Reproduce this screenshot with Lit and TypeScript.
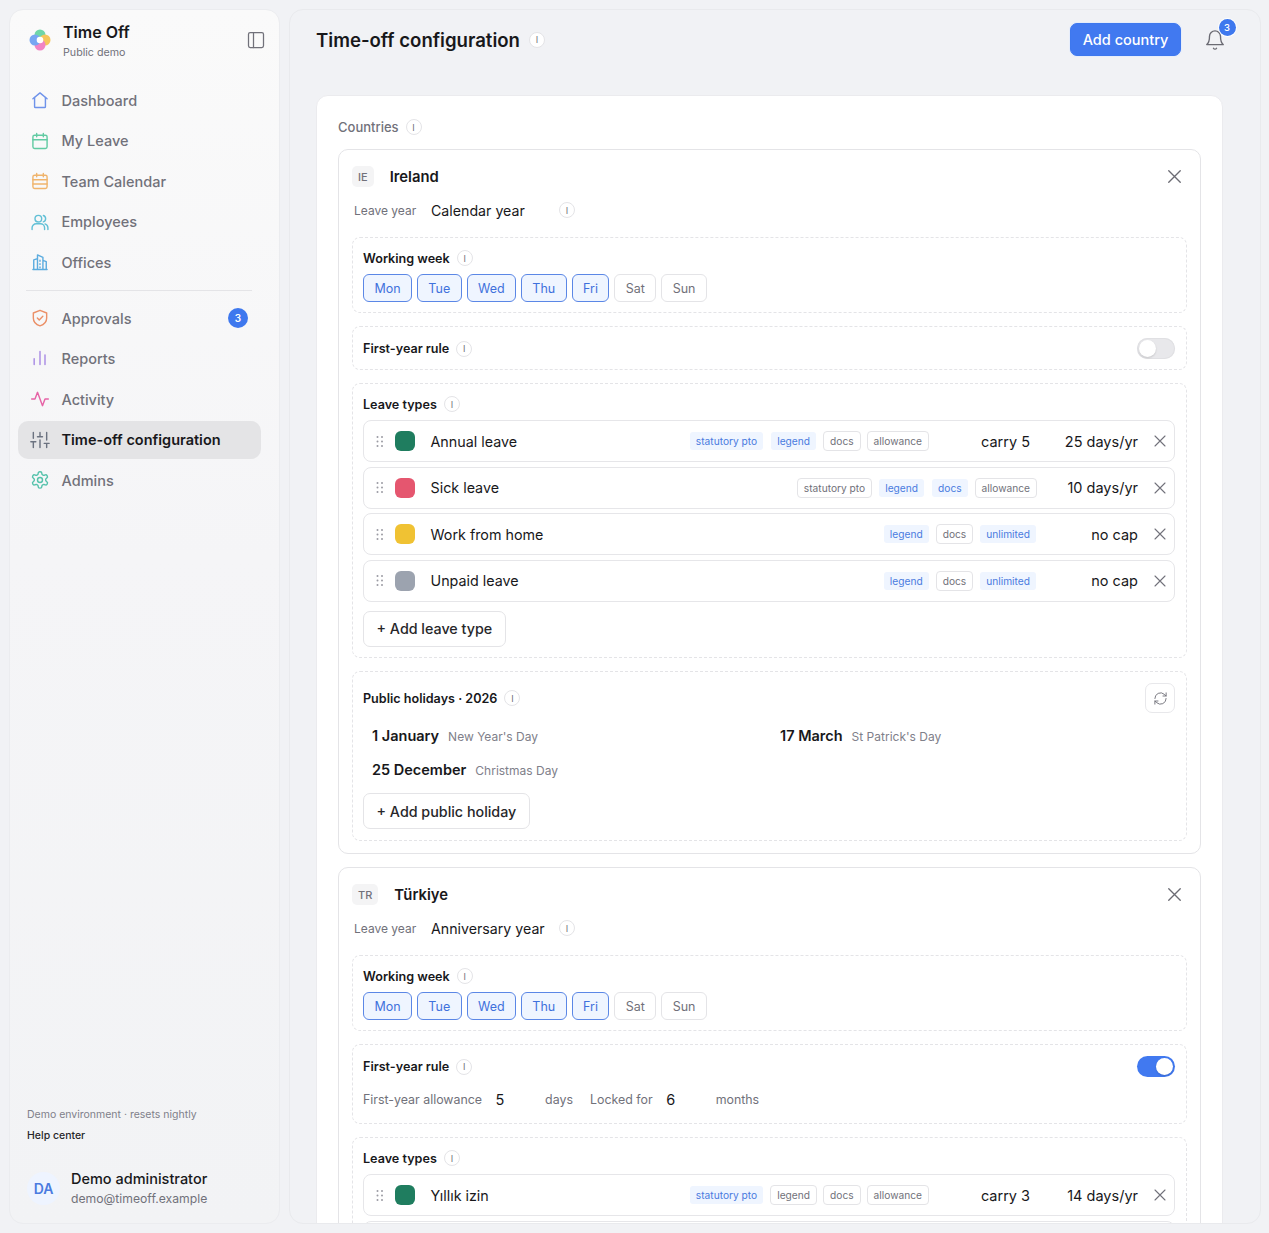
import { LitElement, html, css, svg, nothing } from 'lit';
import { customElement } from 'lit/decorators.js';

const icon = (body: unknown, size = 18, color = 'currentColor', sw = 1.6) => html`<svg
  class="ic"
  width=${size}
  height=${size}
  viewBox="0 0 24 24"
  fill="none"
  stroke=${color}
  stroke-width=${sw}
  stroke-linecap="round"
  stroke-linejoin="round"
>${body}</svg>`;

const paths = {
  home: svg`<path d="M3.500 10.500 12 3.500l8.500 7"/><path d="M5.500 9v11a1 1 0 0 0 1 1h11a1 1 0 0 0 1-1V9"/>`,
  calendar: svg`<rect x="3.500" y="5" width="17" height="16" rx="2"/><path d="M8 3v4M16 3v4M3.500 10.500h17"/>`,
  team: svg`<rect x="3.500" y="5" width="17" height="16" rx="2"/><path d="M8 3v4M16 3v4M3.500 10.500h17M3.500 15.500h17"/>`,
  users: svg`<circle cx="10" cy="8" r="4"/><path d="M2.500 21v-2a5 5 0 0 1 5-5h5a5 5 0 0 1 5 5v2"/><path d="M16 4.200a4 4 0 0 1 0 7.600M21.500 21v-2a5 5 0 0 0-3.500-4.700"/>`,
  building: svg`<path d="M4.500 21V9.500L9 8M9 21V3.500l6.500 3V21M15.500 10l4 1.500V21M3.500 21h17"/><path d="M12 10v1M12 14v1M12 18v1"/>`,
  shield: svg`<path d="M12 2.800 20 6v6c0 4.800-3.400 8-8 9.400C7.400 20 4 16.800 4 12V6z"/><path d="m8.800 12 2.300 2.300 4.300-4.300"/>`,
  chart: svg`<path d="M5 18.500v-7M12 18.500V3M18 18.500V7"/>`,
  activity: svg`<path d="M22 12h-4l-3 8L9 4l-3 8H2"/>`,
  sliders: svg`<path d="M4 21v-7M4 10V3M12 21v-9M12 8V3M20 21v-5M20 12V3M1 14h6M9 8h6M17 16h6"/>`,
  gear: svg`<path d="M12.200 2h-.4a2 2 0 0 0-2 2v.2a2 2 0 0 1-1 1.700l-.4.200a2 2 0 0 1-2 0l-.2-.1a2 2 0 0 0-2.700.7l-.2.400a2 2 0 0 0 .7 2.700l.2.100a2 2 0 0 1 1 1.700v.5a2 2 0 0 1-1 1.700l-.2.100a2 2 0 0 0-.7 2.700l.2.400a2 2 0 0 0 2.700.7l.2-.1a2 2 0 0 1 2 0l.4.200a2 2 0 0 1 1 1.700v.2a2 2 0 0 0 2 2h.4a2 2 0 0 0 2-2v-.2a2 2 0 0 1 1-1.700l.4-.2a2 2 0 0 1 2 0l.2.100a2 2 0 0 0 2.700-.7l.2-.4a2 2 0 0 0-.7-2.700l-.2-.1a2 2 0 0 1-1-1.700v-.5a2 2 0 0 1 1-1.700l.2-.1a2 2 0 0 0 .7-2.700l-.2-.4a2 2 0 0 0-2.700-.7l-.2.100a2 2 0 0 1-2 0l-.4-.2a2 2 0 0 1-1-1.700V4a2 2 0 0 0-2-2z"/><circle cx="12" cy="12" r="3"/>`,
  panel: svg`<rect x="3" y="3" width="18" height="18" rx="2"/><path d="M9 3v18"/>`,
  bell: svg`<path d="M6 8a6 6 0 0 1 12 0c0 7 3 9 3 9H3s3-2 3-9"/><path d="M10.300 21a2 2 0 0 0 3.400 0"/>`,
  x: svg`<path d="M18 6 6 18M6 6l12 12"/>`,
  refresh: svg`<path d="M3 12a9 9 0 0 1 15-6.700L21 8"/><path d="M21 3v5h-5"/><path d="M21 12a9 9 0 0 1-15 6.700L3 16"/><path d="M8 16H3v5"/>`,
};

const navTop = [
  { label: 'Dashboard', icon: paths.home, color: '#6f93ea' },
  { label: 'My Leave', icon: paths.calendar, color: '#62cba3' },
  { label: 'Team Calendar', icon: paths.team, color: '#f0b46c' },
  { label: 'Employees', icon: paths.users, color: '#62c0d6' },
  { label: 'Offices', icon: paths.building, color: '#5cacdf' },
];
const navBottom = [
  { label: 'Approvals', icon: paths.shield, color: '#eb9068', badge: 3 },
  { label: 'Reports', icon: paths.chart, color: '#a88ae4' },
  { label: 'Activity', icon: paths.activity, color: '#e663a6' },
  { label: 'Time-off configuration', icon: paths.sliders, color: '#6b7280', active: true },
  { label: 'Admins', icon: paths.gear, color: '#55c2ab' },
];

type Tag = [string, boolean];
type LeaveType = { name: string; color: string; tags: Tag[]; carry?: string; amount: string };

const irelandTypes: LeaveType[] = [
  {
    name: 'Annual leave',
    color: '#1f7d5f',
    tags: [['statutory pto', true], ['legend', true], ['docs', false], ['allowance', false]],
    carry: 'carry 5',
    amount: '25 days/yr',
  },
  {
    name: 'Sick leave',
    color: '#e5566f',
    tags: [['statutory pto', false], ['legend', true], ['docs', true], ['allowance', false]],
    amount: '10 days/yr',
  },
  {
    name: 'Work from home',
    color: '#f0c233',
    tags: [['legend', true], ['docs', false], ['unlimited', true]],
    amount: 'no cap',
  },
  {
    name: 'Unpaid leave',
    color: '#9ca3af',
    tags: [['legend', true], ['docs', false], ['unlimited', true]],
    amount: 'no cap',
  },
];

const turkiyeTypes: LeaveType[] = [
  {
    name: 'Yıllık izin',
    color: '#1f7d5f',
    tags: [['statutory pto', true], ['legend', false], ['docs', false], ['allowance', false]],
    carry: 'carry 3',
    amount: '14 days/yr',
  },
];

const days = [
  ['Mon', true],
  ['Tue', true],
  ['Wed', true],
  ['Thu', true],
  ['Fri', true],
  ['Sat', false],
  ['Sun', false],
] as const;

@customElement('app-root')
export class AppRoot extends LitElement {
  static styles = css`
    :host {
      display: block;
      height: 1233px;
      overflow: hidden;
      background: #f1f2f5;
      font-family: Inter, 'Liberation Sans', sans-serif;
      color: #18181b;
    }
    * {
      box-sizing: border-box;
    }
    .ic {
      display: block;
      flex: none;
    }
    .shell {
      display: flex;
      gap: 9px;
      height: 1233px;
      padding: 9px 8px 9px 9px;
    }

    .side {
      flex: none;
      width: 271px;
      display: flex;
      flex-direction: column;
      border: 1px solid #ebecef;
      border-radius: 14px;
      background: linear-gradient(180deg, #fafafa 0%, #f5f5f7 45%, #f2f3f5 100%);
      padding: 0 8px;
    }
    .brand {
      display: flex;
      align-items: center;
      height: 60px;
      padding: 0 5.500px 0 11px;
    }
    .logo {
      margin-right: 12px;
    }
    .brand-name {
      font-size: 16px;
      font-weight: 600;
      line-height: 22px;
    }
    .brand-sub {
      font-size: 10.700px;
      line-height: 16px;
      color: #71717a;
      margin-top: 2px;
    }
    .brand-text {
      flex: 1;
      margin-top: 2px;
    }
    .nav {
      display: flex;
      flex-direction: column;
      gap: 2px;
      margin-right: 10px;
    }
    .nav.first {
      margin-top: 11px;
    }
    .item {
      display: flex;
      align-items: center;
      height: 38.500px;
      padding: 0 13px 0 12px;
      border-radius: 10px;
      font-size: 14.500px;
      font-weight: 500;
      color: #71717a;
    }
    .item .ic {
      margin-right: 11.500px;
    }
    .item.active {
      background: #e4e4e6;
      color: #18181b;
      font-weight: 600;
    }
    .item .count {
      margin-left: auto;
      width: 20px;
      height: 20px;
      border-radius: 50%;
      background: #3e78ee;
      color: #fff;
      font-size: 10px;
      font-weight: 600;
      display: flex;
      align-items: center;
      justify-content: center;
    }
    .sep {
      height: 1px;
      background: #e4e4e7;
      margin: 8px 19px 8.500px 8px;
    }
    .foot {
      margin-top: auto;
      padding: 0 9px 16px;
    }
    .env {
      font-size: 10.500px;
      line-height: 14px;
      color: #80808a;
    }
    .help {
      font-size: 10.500px;
      line-height: 14px;
      font-weight: 500;
      margin-top: 7px;
      color: #27272a;
    }
    .user {
      display: flex;
      align-items: center;
      gap: 11px;
      margin-top: 27px;
    }
    .avatar {
      width: 33px;
      height: 33px;
      border-radius: 50%;
      background: #eef4ff;
      color: #4a7be0;
      font-size: 14px;
      font-weight: 600;
      display: flex;
      align-items: center;
      justify-content: center;
    }
    .user-name {
      font-size: 14.500px;
      line-height: 18px;
      font-weight: 500;
    }
    .user-mail {
      font-size: 12.200px;
      line-height: 16px;
      color: #71717a;
      margin-top: 3px;
    }

    .main {
      flex: 1;
      min-width: 0;
      border: 1px solid #e9eaed;
      border-radius: 14px;
      overflow: hidden;
      padding: 0 37px 0 26px;
      background: #f1f2f5;
    }
    .top {
      display: flex;
      align-items: center;
      height: 59px;
      margin-bottom: 26px;
    }
    .title {
      font-size: 18.600px;
      font-weight: 600;
    }
    .top .info {
      margin-left: 9px;
    }
    .add-country {
      margin-left: auto;
      height: 33px;
      width: 111px;
      border: 1px solid #3e78ee;
      border-radius: 7px;
      background: #4179f0;
      color: #fff;
      font: 500 14.500px Inter, sans-serif;
      display: flex;
      align-items: center;
      justify-content: center;
      box-shadow: 0 0 0 1px #e6edfb;
    }
    .bell {
      position: relative;
      margin: 0 -3px 0 23px;
      color: #6b6b73;
    }
    .bell b {
      position: absolute;
      top: -10px;
      left: 14.500px;
      width: 17px;
      height: 17px;
      border-radius: 50%;
      background: #3e78ee;
      color: #fff;
      box-shadow: 0 0 0 1px #fff;
      font-size: 9.500px;
      font-weight: 500;
      display: flex;
      align-items: center;
      justify-content: center;
    }

    .info {
      flex: none;
      width: 16px;
      height: 16px;
      border-radius: 50%;
      border: 1px solid #e4e4e7;
      background: #fff;
      color: #71717a;
      font-size: 9px;
      font-weight: 400;
      display: inline-flex;
      align-items: center;
      justify-content: center;
      margin-left: 7px;
    }

    .panel {
      background: #fff;
      border: 1px solid #ebebee;
      border-radius: 12px;
      padding: 21px 21px 0;
    }
    .panel-head {
      display: flex;
      align-items: center;
      height: 20px;
      margin-bottom: 12px;
      font-size: 13px;
      font-weight: 500;
      color: #71717a;
    }
    .country {
      border: 1px solid #e4e4e7;
      border-radius: 10px;
      padding: 13px 13px 12px;
      margin-bottom: 13px;
    }
    .c-head {
      display: flex;
      align-items: center;
      height: 27px;
      gap: 16px;
    }
    .code {
      height: 21px;
      padding: 0 6px;
      border-radius: 5px;
      background: #f4f4f5;
      color: #71717a;
      font-size: 11px;
      font-weight: 500;
      display: flex;
      align-items: center;
    }
    .c-name {
      font-size: 14.800px;
      font-weight: 600;
    }
    .c-head .ic {
      margin-left: auto;
      margin-right: 1.500px;
      color: #6b6b73;
    }
    .year {
      display: flex;
      align-items: center;
      height: 20px;
      margin: 10px 0 17px 2px;
    }
    .year .lbl {
      width: 77px;
      font-size: 12px;
      color: #71717a;
    }
    .year .val {
      width: 128px;
      font-size: 14.200px;
    }
    .year .info {
      margin-left: 0;
    }
    .section {
      border: 1px dashed #e4e4e7;
      border-radius: 8px;
      padding: 11px 11px 10px 10px;
      margin-bottom: 13px;
    }
    .section:last-child {
      margin-bottom: 0;
    }
    .section.types-sec {
      padding-bottom: 10.500px;
    }
    .section.hol-sec {
      padding-bottom: 11px;
    }
    .s-head {
      display: flex;
      align-items: center;
      height: 18px;
      font-size: 12.600px;
      font-weight: 600;
    }
    .days {
      display: flex;
      gap: 5px;
      margin-top: 7px;
    }
    .day {
      height: 28px;
      padding: 0 10.400px;
      border: 1px solid #e4e4e7;
      border-radius: 6px;
      background: #fff;
      color: #71717a;
      font-size: 12.500px;
      display: flex;
      align-items: center;
    }
    .day.on {
      border-color: #5b87e6;
      background: #eff5ff;
      color: #3f71dc;
    }
    .toggle {
      margin-left: auto;
      width: 38px;
      height: 21px;
      border-radius: 11px;
      background: #e8e8eb;
      box-shadow: inset 0 0 0 1px #e0e0e3;
      padding: 2px;
      display: flex;
    }
    .toggle i {
      width: 17px;
      height: 17px;
      border-radius: 50%;
      background: #fff;
      box-shadow: 0 1px 2px rgba(0, 0, 0, 0.15);
    }
    .toggle.on {
      background: #4179f0;
      box-shadow: none;
      justify-content: flex-end;
    }
    .rule {
      display: flex;
      align-items: center;
      height: 20px;
      margin-top: 12px;
      margin-bottom: 4px;
      font-size: 12.400px;
      color: #71717a;
    }
    .rule .num {
      color: #18181b;
      font-size: 14.500px;
      width: 49.500px;
      margin-left: 13.500px;
    }
    .rule .unit {
      margin-right: 17px;
    }
    .types {
      display: flex;
      flex-direction: column;
      gap: 4.500px;
      margin-top: 7px;
    }
    .type {
      display: flex;
      align-items: center;
      flex: none;
      height: 42px;
      padding: 0 4px 0 12px;
      border: 1px solid #e6e6e9;
      border-radius: 8px;
      background: #fff;
    }
    .grip {
      flex: none;
      margin-right: 11px;
    }
    .swatch {
      flex: none;
      width: 20px;
      height: 20px;
      border-radius: 6px;
      margin-right: 15.500px;
    }
    .t-name {
      flex: 1;
      font-size: 14.300px;
    }
    .tags {
      display: flex;
      align-items: center;
      gap: 6px;
    }
    .tag {
      height: 20px;
      padding: 0 6px;
      border: 1px solid #e4e4e7;
      border-radius: 4px;
      background: #fff;
      color: #71717a;
      font-size: 10.200px;
      display: flex;
      align-items: center;
    }
    .tag.on {
      border-color: transparent;
      background: #eff5ff;
      background-clip: padding-box;
      color: #4a7be0;
    }
    .carry,
    .amount {
      flex: none;
      width: 101px;
      text-align: right;
      font-size: 14.500px;
    }
    .carry + .amount {
      margin-left: 7px;
    }
    .type > .ic {
      margin-left: 12px;
      color: #71717a;
    }
    .add {
      display: inline-flex;
      align-items: center;
      height: 36px;
      margin-top: 9px;
      padding: 0 12.500px;
      border: 1px solid #e4e4e7;
      border-radius: 7px;
      background: #fff;
      font-size: 14.300px;
      font-weight: 500;
      color: #27272a;
    }
    .refresh {
      margin-left: auto;
      width: 30px;
      height: 30px;
      border: 1px solid #e8e8eb;
      border-radius: 7px;
      display: flex;
      align-items: center;
      justify-content: center;
      color: #71717a;
    }
    .s-head.tall {
      height: 30px;
    }
    .hols {
      display: grid;
      grid-template-columns: 408px 1fr;
      row-gap: 10px;
      margin: 11px 0 2px;
      padding-left: 9px;
    }
    .hol {
      display: flex;
      align-items: baseline;
      gap: 9px;
      height: 24px;
      line-height: 24px;
    }
    .hol b {
      font-size: 14.500px;
      font-weight: 600;
    }
    .hol span {
      font-size: 12px;
      color: #80808a;
    }
  `;

  private renderNav(items: typeof navBottom, cls = '') {
    return html`<nav class="nav ${cls}">
      ${items.map(
        (n) => html`<div class="item ${n.active ? 'active' : ''}">
          ${icon(n.icon, 20, n.color, 1.700)}<span>${n.label}</span>
          ${n.badge ? html`<span class="count">${n.badge}</span>` : nothing}
        </div>`,
      )}
    </nav>`;
  }

  private renderSidebar() {
    return html`<aside class="side">
      <div class="brand">
        <svg class="logo ic" width="22" height="22" viewBox="0 0 22 22">
          <circle cx="11" cy="6" r="5.500" fill="#6fd6a8" />
          <circle cx="16" cy="11" r="5.500" fill="#f5c65c" />
          <circle cx="11" cy="16" r="5.500" fill="#f184c4" />
          <circle cx="6" cy="11" r="5.500" fill="#77a6f2" />
          <circle cx="11" cy="11" r="3.300" fill="#fff" />
        </svg>
        <div class="brand-text">
          <div class="brand-name">Time Off</div>
          <div class="brand-sub">Public demo</div>
        </div>
        ${icon(paths.panel, 20, '#71717a', 1.500)}
      </div>
      ${this.renderNav(navTop, 'first')}
      <div class="sep"></div>
      ${this.renderNav(navBottom)}
      <div class="foot">
        <div class="env">Demo environment · resets nightly</div>
        <div class="help">Help center</div>
        <div class="user">
          <div class="avatar">DA</div>
          <div>
            <div class="user-name">Demo administrator</div>
            <div class="user-mail">demo@timeoff.example</div>
          </div>
        </div>
      </div>
    </aside>`;
  }

  private info() {
    return html`<span class="info">I</span>`;
  }

  private renderWeek() {
    return html`<section class="section">
      <div class="s-head">Working week ${this.info()}</div>
      <div class="days">
        ${days.map(([d, on]) => html`<span class="day ${on ? 'on' : ''}">${d}</span>`)}
      </div>
    </section>`;
  }

  private renderType(t: LeaveType) {
    return html`<div class="type">
      <svg class="grip" width="8" height="11" viewBox="0 0 8 11" fill="#9b9ba3">
        ${[1, 5.500, 10].map(
          (y) => svg`<circle cx="1.500" cy=${y} r="1"/><circle cx="6" cy=${y} r="1"/>`,
        )}
      </svg>
      <span class="swatch" style="background:${t.color}"></span>
      <span class="t-name">${t.name}</span>
      <div class="tags">
        ${t.tags.map(([name, on]) => html`<span class="tag ${on ? 'on' : ''}">${name}</span>`)}
      </div>
      ${t.carry ? html`<span class="carry">${t.carry}</span>` : nothing}
      <span class="amount">${t.amount}</span>
      ${icon(paths.x, 20, 'currentColor', 1.300)}
    </div>`;
  }

  private renderTypes(types: LeaveType[], add = true) {
    return html`<section class="section types-sec">
      <div class="s-head">Leave types ${this.info()}</div>
      <div class="types">
        ${types.map((t) => this.renderType(t))}
        ${add ? nothing : html`<div class="type"></div>`}
      </div>
      ${add ? html`<span class="add">+ Add leave type</span>` : nothing}
    </section>`;
  }

  private renderHead(code: string, name: string, year: string) {
    return html`<div class="c-head">
        <span class="code">${code}</span>
        <span class="c-name">${name}</span>
        ${icon(paths.x, 23, 'currentColor', 1.400)}
      </div>
      <div class="year">
        <span class="lbl">Leave year</span>
        <span class="val">${year}</span>
        ${this.info()}
      </div>`;
  }

  private renderMain() {
    return html`<main class="main">
      <header class="top">
        <span class="title">Time-off configuration</span>
        ${this.info()}
        <button class="add-country">Add country</button>
        <div class="bell">${icon(paths.bell, 22, 'currentColor', 1.500)}<b>3</b></div>
      </header>
      <div class="panel">
        <div class="panel-head">Countries ${this.info()}</div>

        <article class="country">
          ${this.renderHead('IE', 'Ireland', 'Calendar year')} ${this.renderWeek()}
          <section class="section">
            <div class="s-head" style="height:21px">
              First-year rule ${this.info()}
              <span class="toggle"><i></i></span>
            </div>
          </section>
          ${this.renderTypes(irelandTypes)}
          <section class="section hol-sec">
            <div class="s-head tall">
              Public holidays · 2026 ${this.info()}
              <span class="refresh">${icon(paths.refresh, 15, 'currentColor', 1.500)}</span>
            </div>
            <div class="hols">
              <div class="hol"><b>1 January</b><span>New Year's Day</span></div>
              <div class="hol"><b>17 March</b><span>St Patrick's Day</span></div>
              <div class="hol"><b>25 December</b><span>Christmas Day</span></div>
            </div>
            <span class="add">+ Add public holiday</span>
          </section>
        </article>

        <article class="country">
          ${this.renderHead('TR', 'Türkiye', 'Anniversary year')} ${this.renderWeek()}
          <section class="section">
            <div class="s-head" style="height:21px">
              First-year rule ${this.info()}
              <span class="toggle on"><i></i></span>
            </div>
            <div class="rule">
              <span>First-year allowance</span><span class="num">5</span
              ><span class="unit">days</span> <span>Locked for</span><span class="num">6</span
              ><span>months</span>
            </div>
          </section>
          ${this.renderTypes(turkiyeTypes, false)}
        </article>
      </div>
    </main>`;
  }

  render() {
    return html`<div class="shell">${this.renderSidebar()} ${this.renderMain()}</div>`;
  }
}
